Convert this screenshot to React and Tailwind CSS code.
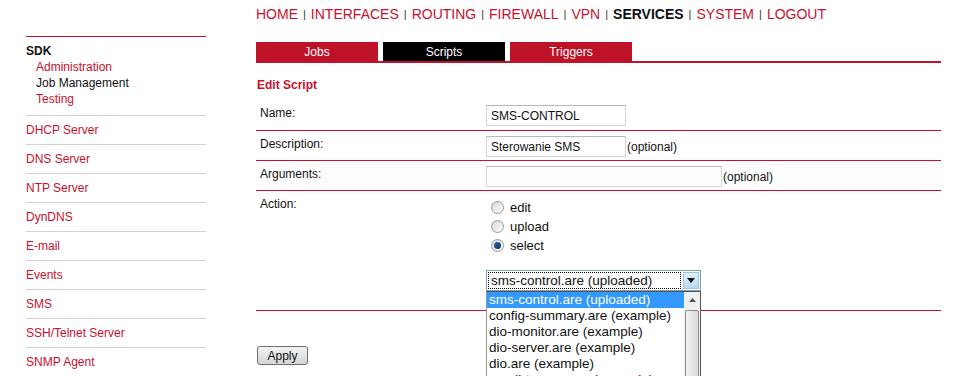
import React from 'react';

const RED = 'text-[#c8102e]';

const NAV = ['HOME', 'INTERFACES', 'ROUTING', 'FIREWALL', 'VPN', 'SERVICES', 'SYSTEM', 'LOGOUT'];

const SIDE_ITEMS = [
  'DHCP Server',
  'DNS Server',
  'NTP Server',
  'DynDNS',
  'E-mail',
  'Events',
  'SMS',
  'SSH/Telnet Server',
  'SNMP Agent',
];

const SCRIPTS = [
  'sms-control.are (uploaded)',
  'config-summary.are (example)',
  'dio-monitor.are (example)',
  'dio-server.are (example)',
  'dio.are (example)',
  'email-to-sms.are (example)',
];

function Radio({ checked, label }) {
  return (
    <div className="flex items-center h-[19px]">
      <span className="ml-[5px] w-[13px] h-[13px] rounded-full border border-[#9a9a9a] bg-gradient-to-br from-[#d6d6d6] to-[#ffffff] flex items-center justify-center">
        {checked && <span className="w-[7px] h-[7px] rounded-full bg-gradient-to-br from-[#2a6aa8] to-[#0a2f5a]" />}
      </span>
      <span className="ml-[6px] text-[13px] text-[#111]">{label}</span>
    </div>
  );
}

function Row({ label, children, className = '' }) {
  return (
    <div className={`flex border-b border-[#c8102e] ${className}`}>
      <div className="w-[230px] pl-[4px] pt-[5px] leading-[16px] text-[#111]">{label}</div>
      <div className="flex-1">{children}</div>
    </div>
  );
}

function TextInput({ value, width }) {
  return (
    <div className={`h-[21px] border border-[#d4d4d4] border-t-[#b8b8b8] px-[4px] flex items-center text-[12px] text-[#111] ${width}`}>
      {value}
    </div>
  );
}

export default function App() {
  return (
    <div className="w-[967px] h-[376px] overflow-hidden bg-white flex text-[12px]" style={{ fontFamily: '"Liberation Sans", Arial, sans-serif' }}>
      {/* Sidebar */}
      <div className="ml-[26px] w-[180px] pt-[36px] shrink-0">
        <div className="border-t border-[#c8102e] pt-[6px] pb-[8px] border-b border-b-[#d2d2d2]">
          <div className="font-bold leading-[16px] text-[#111]">SDK</div>
          <div className={`pl-[10px] leading-[16px] ${RED}`}>Administration</div>
          <div className="pl-[10px] leading-[16px] text-[#111]">Job Management</div>
          <div className={`pl-[10px] leading-[16px] ${RED}`}>Testing</div>
        </div>
        {SIDE_ITEMS.map((s) => (
          <div key={s} className={`h-[29px] flex items-center border-b border-[#d2d2d2] ${RED}`}>
            {s}
          </div>
        ))}
      </div>

      {/* Main */}
      <div className="ml-[50px] w-[685px] shrink-0">
        <div className="h-[28px] text-[14px] leading-[16px] flex items-center">
          {NAV.map((n, i) => (
            <React.Fragment key={n}>
              {i > 0 && <span className="mx-[5px] text-[11px] text-[#333]">|</span>}
              <span className={n === 'SERVICES' ? 'font-bold text-[#111]' : RED}>{n}</span>
            </React.Fragment>
          ))}
        </div>

        <div className="mt-[14px] flex gap-[5px] border-b-2 border-[#c0122a] h-[21px]">
          <div className="w-[122px] h-[19px] bg-[#be1229] text-white flex items-center justify-center">Jobs</div>
          <div className="w-[122px] h-[19px] bg-black text-white flex items-center justify-center">Scripts</div>
          <div className="w-[122px] h-[19px] bg-[#be1229] text-white flex items-center justify-center">Triggers</div>
        </div>

        <div className={`mt-[14px] pl-[1px] font-bold leading-[16px] ${RED}`}>Edit Script</div>

        <div className="mt-[7px]">
          <Row label="Name:" className="h-[31px]">
            <div className="pt-[5px]">
              <TextInput value="SMS-CONTROL" width="w-[140px]" />
            </div>
          </Row>
          <Row label="Description:" className="h-[30px]">
            <div className="pt-[5px] flex items-center">
              <TextInput value="Sterowanie SMS" width="w-[140px]" />
              <span className="ml-[1px] text-[#111]">(optional)</span>
            </div>
          </Row>
          <Row label="Arguments:" className="h-[30px]">
            <div className="pt-[5px] flex items-center">
              <TextInput value="" width="w-[236px]" />
              <span className="ml-[1px] text-[#111]">(optional)</span>
            </div>
          </Row>
          <Row label="Action:" className="h-[120px]">
            <div className="pt-[7px] relative">
              <Radio label="edit" />
              <Radio label="upload" />
              <Radio checked label="select" />

              <div className="mt-[15px] relative w-[215px] h-[21px] border border-[#7f9db9] flex bg-white">
                <div className="flex-1 m-[1px] border border-dotted border-black flex items-center px-[2px] text-[13.5px] text-[#111] leading-none">
                  sms-control.are (uploaded)
                </div>
                <div className="w-[16px] m-[1px] bg-gradient-to-b from-[#e4f1fb] to-[#b8d8f2] border border-[#9cc3e6] flex items-center justify-center">
                  <svg width="8" height="5" viewBox="0 0 8 5"><path d="M0 0h8L4 5z" fill="#111" /></svg>
                </div>

                {/* open dropdown list */}
                <div className="absolute left-[-1px] top-[20px] w-[215px] h-[110px] border border-[#555] border-l-[#999] bg-white flex z-10">
                  <div className="flex-1 text-[13.5px] leading-[16px] text-[#111] overflow-hidden">
                    {SCRIPTS.map((s, i) => (
                      <div key={s} className={`px-[2px] h-[16px] whitespace-nowrap ${i === 0 ? 'bg-[#3399ff] text-white' : ''}`}>
                        {s}
                      </div>
                    ))}
                  </div>
                  <div className="w-[16px] bg-[#f0f0f0] flex flex-col">
                    <div className="h-[16px] flex items-center justify-center">
                      <svg width="7" height="4" viewBox="0 0 7 4"><path d="M0 4h7L3.5 0z" fill="#555" /></svg>
                    </div>
                    <div className="mt-[2px] flex-1 mx-[1px] border border-[#8a8a8a] rounded-[2px] bg-gradient-to-r from-[#f4f4f4] to-[#dadada]" />
                  </div>
                </div>
              </div>
            </div>
          </Row>
        </div>

        <div className="mt-[35px] pl-[1px]">
          <button className="w-[51px] h-[19px] border border-[#707070] rounded-[3px] bg-gradient-to-b from-[#f2f2f2] to-[#d6d6d6] text-[12px] text-[#111] flex items-center justify-center">
            Apply
          </button>
        </div>
      </div>
    </div>
  );
}
